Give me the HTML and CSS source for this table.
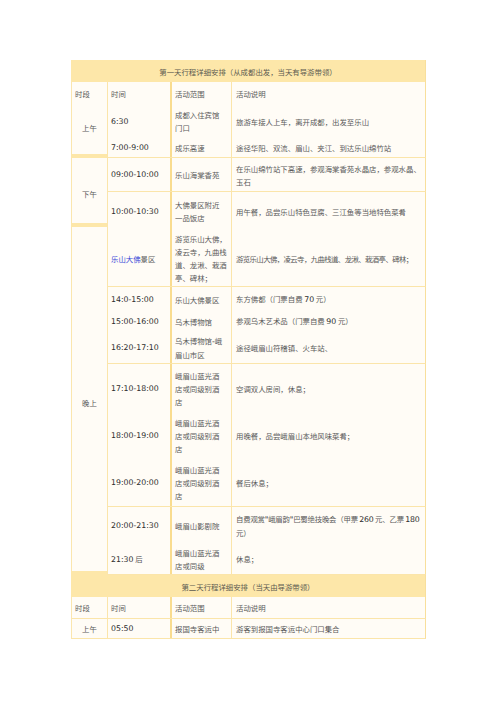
FILE: index.html
```html
<!DOCTYPE html>
<html lang="zh-CN">
<head>
<meta charset="utf-8">
<title>行程安排</title>
<link rel="stylesheet" href="styles.css">
</head>
<body>
<div class="sheet">
  <div class="day-head">第一天行程详细安排（从成都出发，当天有导游带领）</div>
  <div class="main">
    <div class="c1">
      <div class="c1-cell c1-first"><span class="c1-top">时段</span><span class="c1-mid">上午</span></div>
      <div class="c1-cell c1-pm">下午</div>
      <div class="c1-cell c1-eve">晚上</div>
    </div>
    <div class="right">
      <div class="block b1">
        <div class="cell t">时间</div>
        <div class="cell p">活动范围</div>
        <div class="cell d">活动说明</div>
        <div class="cell t"><span class="num">6:30</span></div>
        <div class="cell p"><span>成都入住宾馆<br>门口</span></div>
        <div class="cell d">旅游车接人上车，离开成都，出发至乐山</div>
        <div class="cell t"><span class="num">7:00-9:00</span></div>
        <div class="cell p">成乐高速</div>
        <div class="cell d">途径华阳、双流、眉山、夹江、到达乐山绵竹站</div>
      </div>
      <div class="block b2">
        <div class="cell t"><span class="num">09:00-10:00</span></div>
        <div class="cell p">乐山海棠香苑</div>
        <div class="cell d"><span>在乐山绵竹站下高速，参观海棠香苑水晶店，参观水晶、<br>玉石</span></div>
      </div>
      <div class="block b3">
        <div class="cell t"><span class="num">10:00-10:30</span></div>
        <div class="cell p"><span>大佛景区附近<br>一品饭店</span></div>
        <div class="cell d">用午餐，品尝乐山特色豆腐、三江鱼等当地特色菜肴</div>
        <div class="cell t"><span><span class="link">乐山大佛</span>景区</span></div>
        <div class="cell p"><span>游览乐山大佛，<br>凌云寺，九曲栈<br>道、龙湫、栽酒<br>亭、碑林；</span></div>
        <div class="cell d tight">游览乐山大佛，凌云寺，九曲栈道、龙湫、栽酒亭、碑林；</div>
      </div>
      <div class="block b4">
        <div class="cell t"><span class="num">14:0-15:00</span></div>
        <div class="cell p">乐山大佛景区</div>
        <div class="cell d"><span>东方佛都（门票自费 <span class="num">70</span> 元）</span></div>
        <div class="cell t"><span class="num">15:00-16:00</span></div>
        <div class="cell p">乌木博物馆</div>
        <div class="cell d"><span>参观乌木艺术品（门票自费 <span class="num">90</span> 元）</span></div>
        <div class="cell t"><span class="num">16:20-17:10</span></div>
        <div class="cell p"><span>乌木博物馆<span class="num">-</span>峨<br>眉山市区</span></div>
        <div class="cell d">途径峨眉山符稽镇、火车站、</div>
      </div>
      <div class="block b5">
        <div class="cell t"><span class="num">17:10-18:00</span></div>
        <div class="cell p"><span>峨眉山蓝光酒<br>店或同级别酒<br>店</span></div>
        <div class="cell d">空调双人房间，休息；</div>
        <div class="cell t"><span class="num">18:00-19:00</span></div>
        <div class="cell p"><span>峨眉山蓝光酒<br>店或同级别酒<br>店</span></div>
        <div class="cell d">用晚餐，品尝峨眉山本地风味菜肴；</div>
        <div class="cell t"><span class="num">19:00-20:00</span></div>
        <div class="cell p"><span>峨眉山蓝光酒<br>店或同级别酒<br>店</span></div>
        <div class="cell d">餐后休息；</div>
      </div>
      <div class="block b6">
        <div class="cell t"><span class="num">20:00-21:30</span></div>
        <div class="cell p">峨眉山影剧院</div>
        <div class="cell d snug"><span>自费观赏<span class="num">"</span>峨眉韵<span class="num">"</span>巴蜀绝技晚会（甲票 <span class="num">260</span> 元、乙票 <span class="num">180</span><br>元）</span></div>
        <div class="cell t"><span><span class="num">21:30</span> 后</span></div>
        <div class="cell p"><span>峨眉山蓝光酒<br>店或同级</span></div>
        <div class="cell d">休息；</div>
      </div>
    </div>
  </div>
  <div class="day-head">第二天行程详细安排（当天由导游带领）</div>
  <div class="block full b7">
    <div class="cell s">时段</div>
    <div class="cell t">时间</div>
    <div class="cell p">活动范围</div>
    <div class="cell d">活动说明</div>
  </div>
  <div class="block full b8">
    <div class="cell s center">上午</div>
    <div class="cell t"><span class="num">05:50</span></div>
    <div class="cell p">报国寺客运中</div>
    <div class="cell d">游客到报国寺客运中心门口集合</div>
  </div>
</div>
</body>
</html>
```

FILE: styles.css
```css
* {
  box-sizing: border-box;
}

html, body {
  margin: 0;
  padding: 0;
  background: #ffffff;
}

body {
  font-family: "Noto Sans CJK SC", "DejaVu Sans", sans-serif;
  font-size: 7.4px;
  line-height: 13px;
  color: #5a5a5a;
}

.sheet {
  width: 355px;
  margin: 60px 0 0 71px;
  background: #fde7a9;
}

.day-head {
  height: 22px;
  display: flex;
  align-items: center;
  justify-content: center;
  border-right: 1px solid #f8df9c;
  color: #5c5a50;
  white-space: nowrap;
}

.main {
  display: flex;
  height: 493px;
}

.c1 {
  width: 36px;
  flex: 0 0 36px;
  display: flex;
  flex-direction: column;
  gap: 4px;
}

.c1-cell {
  background: #fffcf6;
  border-left: 1px solid #fbe6ae;
  display: flex;
  align-items: center;
  justify-content: center;
}

.c1-first {
  height: 72px;
  flex-direction: column;
  align-items: stretch;
  justify-content: flex-start;
}

.c1-top {
  height: 22px;
  display: flex;
  align-items: center;
  padding-left: 3px;
}

.c1-mid {
  flex: 1;
  display: flex;
  align-items: center;
  justify-content: center;
  padding-bottom: 4px;
}

.c1-pm {
  height: 65px;
  padding-top: 5px;
}

.c1-eve {
  height: 344px;
  padding-top: 6px;
}

.right {
  flex: 1 1 0;
  min-width: 0;
  display: flex;
  flex-direction: column;
}

.block {
  display: grid;
  grid-template-columns: 63px 61px minmax(0, 1fr);
  border-bottom: 1px solid #fbe5aa;
  border-right: 1px solid #f8df9c;
  background: #fffcf6;
}

.block.full {
  grid-template-columns: 35px 63px 61px minmax(0, 1fr);
  border-left: 1px solid #fbe6ae;
}

.b1 { height: 76px; grid-template-rows: 22px 34px 19px; }
.b2 { height: 34px; grid-template-rows: 33px; }
.b3 { height: 95px; grid-template-rows: 38px 56px; }
.b4 { height: 77px; grid-template-rows: 24px 20px 32px; }
.b5 { height: 143px; grid-template-rows: 48px 47px 47px; }
.b6 { height: 68px; grid-template-rows: 36px 31px; }
.b7 { height: 22px; grid-template-rows: 21px; }
.b8 { height: 20px; grid-template-rows: 19px; }

.cell {
  display: flex;
  align-items: center;
  white-space: nowrap;
  min-width: 0;
}

.cell.s {
  padding-left: 3px;
}

.cell.center {
  justify-content: center;
  padding-left: 0;
}

.cell.t {
  border-left: 1px solid #fbe5aa;
  padding-left: 3px;
}

.cell.p {
  border-left: 2px solid #f9dc8f;
  padding-left: 3px;
}

.cell.d {
  border-left: 1px solid #fbe5aa;
  padding-left: 4px;
}

.cell.tight {
  letter-spacing: -0.6px;
}

.cell.snug {
  letter-spacing: -0.2px;
}

.num {
  font-family: "DejaVu Sans", "Noto Sans", sans-serif;
  font-size: 7.8px;
  color: #2e2e2e;
}

.link {
  color: #3b4bd8;
}
```
